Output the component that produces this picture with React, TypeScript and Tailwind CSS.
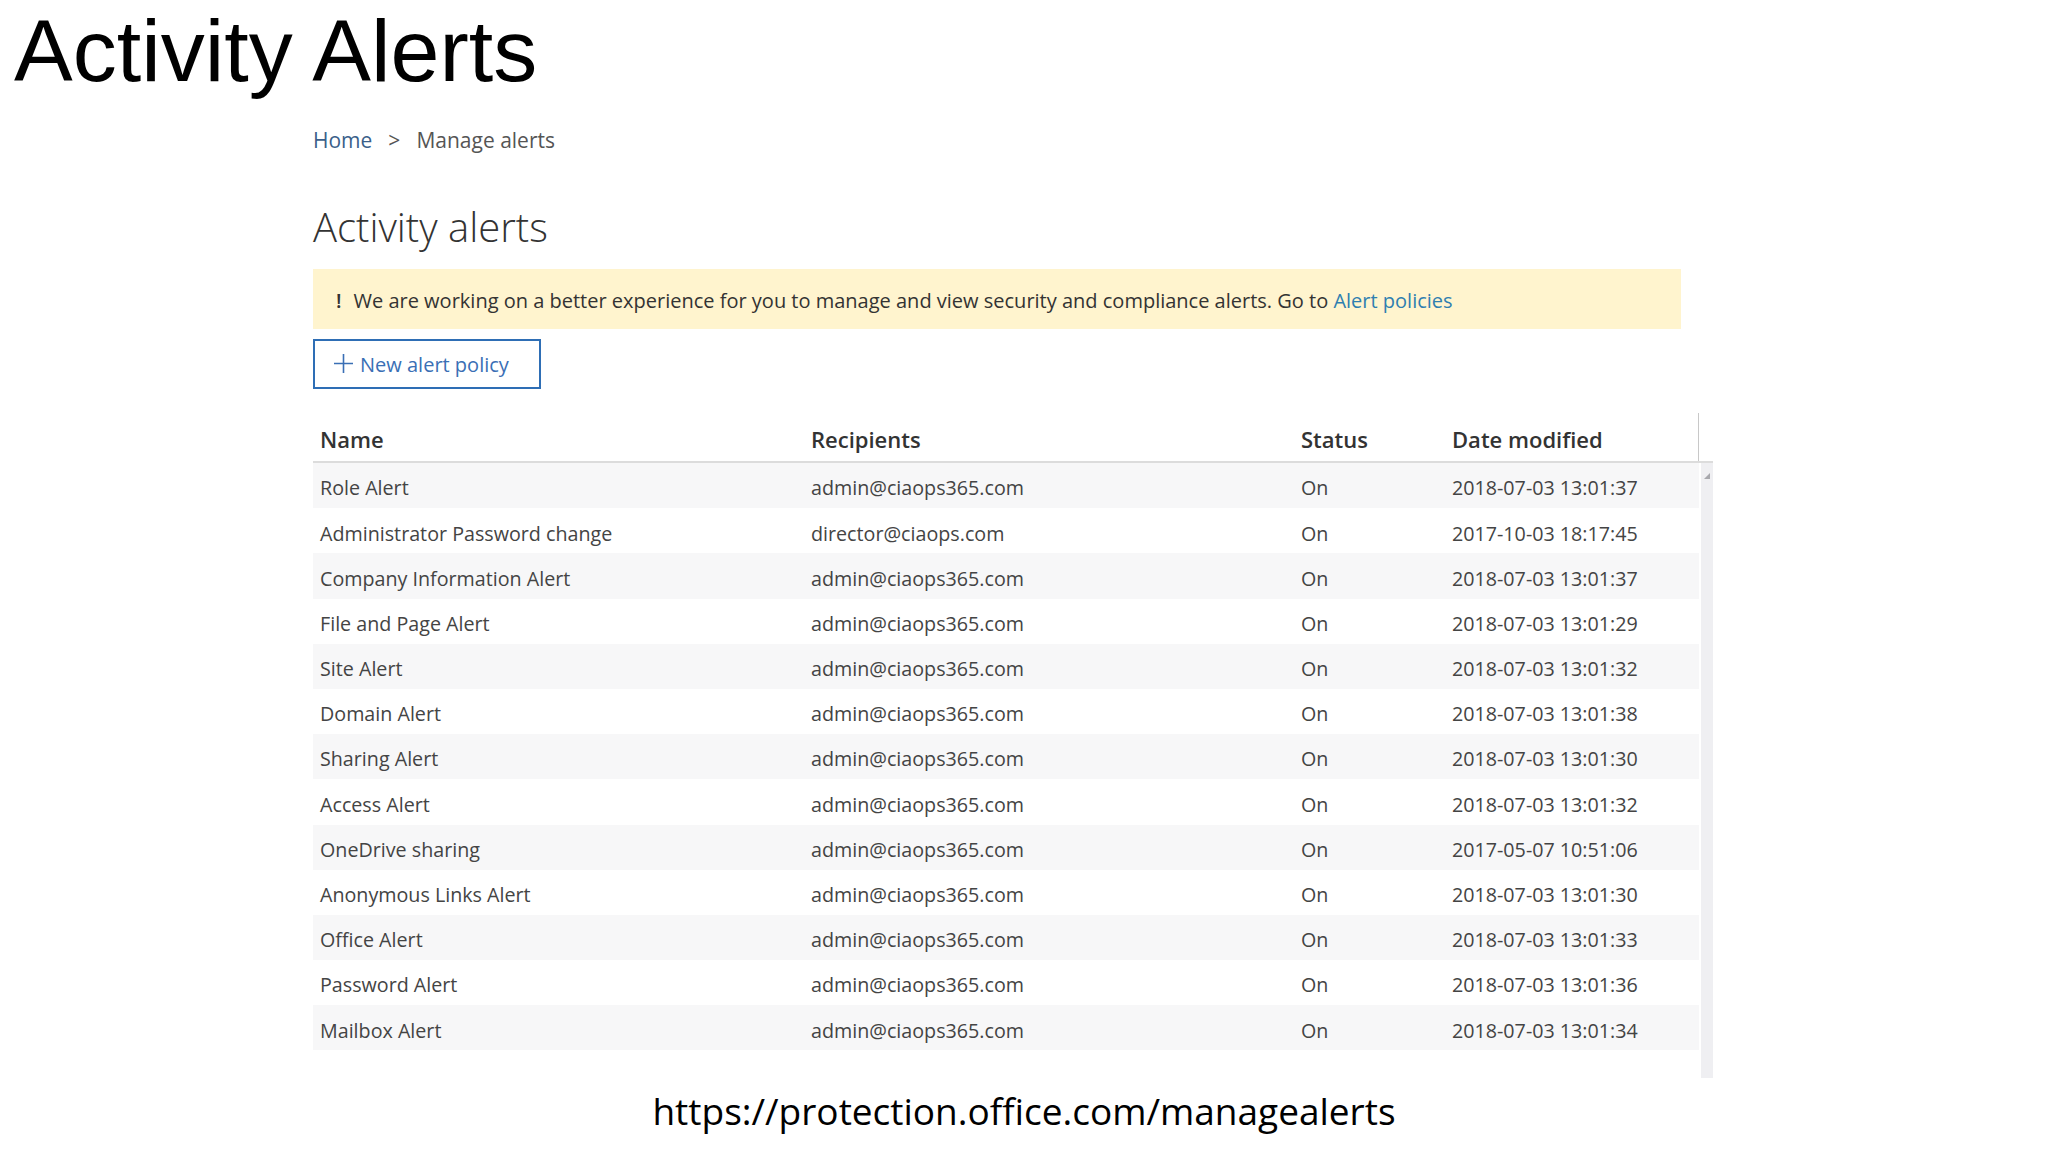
import React from 'react';

type AlertRow = {
  name: string;
  recipients: string;
  status: string;
  modified: string;
};

const alerts: AlertRow[] = [
  { name: 'Role Alert', recipients: 'admin@ciaops365.com', status: 'On', modified: '2018-07-03 13:01:37' },
  { name: 'Administrator Password change', recipients: 'director@ciaops.com', status: 'On', modified: '2017-10-03 18:17:45' },
  { name: 'Company Information Alert', recipients: 'admin@ciaops365.com', status: 'On', modified: '2018-07-03 13:01:37' },
  { name: 'File and Page Alert', recipients: 'admin@ciaops365.com', status: 'On', modified: '2018-07-03 13:01:29' },
  { name: 'Site Alert', recipients: 'admin@ciaops365.com', status: 'On', modified: '2018-07-03 13:01:32' },
  { name: 'Domain Alert', recipients: 'admin@ciaops365.com', status: 'On', modified: '2018-07-03 13:01:38' },
  { name: 'Sharing Alert', recipients: 'admin@ciaops365.com', status: 'On', modified: '2018-07-03 13:01:30' },
  { name: 'Access Alert', recipients: 'admin@ciaops365.com', status: 'On', modified: '2018-07-03 13:01:32' },
  { name: 'OneDrive sharing', recipients: 'admin@ciaops365.com', status: 'On', modified: '2017-05-07 10:51:06' },
  { name: 'Anonymous Links Alert', recipients: 'admin@ciaops365.com', status: 'On', modified: '2018-07-03 13:01:30' },
  { name: 'Office Alert', recipients: 'admin@ciaops365.com', status: 'On', modified: '2018-07-03 13:01:33' },
  { name: 'Password Alert', recipients: 'admin@ciaops365.com', status: 'On', modified: '2018-07-03 13:01:36' },
  { name: 'Mailbox Alert', recipients: 'admin@ciaops365.com', status: 'On', modified: '2018-07-03 13:01:34' },
];

const gridCols = 'grid grid-cols-[491px_490px_151px_1fr]';

export default function App() {
  return (
    <div className="h-[1152px] w-[2048px] overflow-hidden bg-white font-['Open_Sans',sans-serif]">
      <div className="h-[126px] pl-[14px] pt-[7px]">
        <h1 className="font-['Liberation_Sans',Arial,sans-serif] text-[88px] leading-none tracking-[0px] text-black">
          Activity Alerts
        </h1>
      </div>

      <div className="ml-[313px] w-[1400px]">
        <Breadcrumb />

        <h2 className="mt-[46px] h-[53px] text-[40px] leading-[53px] font-light text-[#333]">
          Activity alerts
        </h2>

        <div className="mt-[16px] flex h-[60px] w-[1368px] items-center bg-[#fff4ce] pl-[23px] pt-[3px] text-[20px] text-[#333]">
          <span className="mr-[12px] font-semibold">!</span>
          <span>
            We are working on a better experience for you to manage and view security and compliance
            alerts. Go to <span className="text-[#2f7fb0]">Alert policies</span>
          </span>
        </div>

        <button className="mt-[10px] flex h-[50px] w-[228px] items-center border-2 border-[#2e6eb5] pl-[18px] pt-[1px] text-[20px] text-[#3a6fb5]">
          <svg width="21" height="21" viewBox="0 0 21 21" className="mr-[6px] mb-[3px]">
            <path d="M10.5 1v19M1 10.5h19" stroke="#3a6fb5" strokeWidth="1.6" fill="none" />
          </svg>
          New alert policy
        </button>

        <AlertsTable />
      </div>

      <div className="mt-[9px] text-center text-[37px] leading-[48px] text-black">
        https://protection.office.com/managealerts
      </div>
    </div>
  );
}

function Breadcrumb() {
  return (
    <div className="flex h-[28px] items-center text-[21px] leading-[28px]">
      <span className="text-[#3b5f8a]">Home</span>
      <span className="mx-[16px] text-[#555]">&gt;</span>
      <span className="text-[#555]">Manage alerts</span>
    </div>
  );
}

function AlertsTable() {
  return (
    <div className="mt-[24px] w-[1400px]">
      <div className="flex border-b-2 border-[#dcdcdc]">
        <div
          className={`${gridCols} h-[48px] w-[1386px] items-center border-r border-[#c8c8c8] pt-[4px] text-[22px] font-semibold text-[#333]`}
        >
          <span className="pl-[7px]">Name</span>
          <span className="pl-[7px]">Recipients</span>
          <span className="pl-[7px]">Status</span>
          <span className="pl-[7px]">Date modified</span>
        </div>
      </div>

      <div className="flex h-[615px]">
        <div className="w-[1386px]">
          {alerts.map((alert, index) => (
            <div
              key={alert.name}
              className={`${gridCols} h-[45.2px] items-center pt-[5px] text-[19.7px] text-[#444] ${
                index % 2 === 0 ? 'bg-[#f7f7f8]' : 'bg-white'
              }`}
            >
              <span className="pl-[7px]">{alert.name}</span>
              <span className="pl-[7px]">{alert.recipients}</span>
              <span className="pl-[7px]">{alert.status}</span>
              <span className="pl-[7px]">{alert.modified}</span>
            </div>
          ))}
        </div>
        <div className="ml-[2px] flex w-[12px] justify-center bg-[#efeff2] pt-[10px]">
          <svg width="6" height="6" viewBox="0 0 6 6">
            <path d="M6 0v6H0z" fill="#a8a8ad" />
          </svg>
        </div>
      </div>
    </div>
  );
}
